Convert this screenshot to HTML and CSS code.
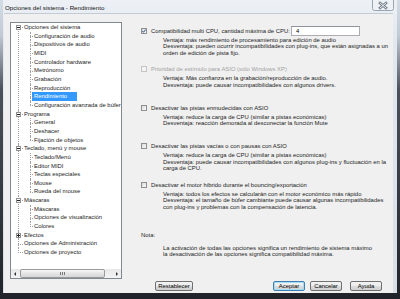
FILE: index.html
```html
<!DOCTYPE html>
<html lang="es">
<head>
    <meta charset="UTF-8">
    <title>Opciones del sistema - Rendimiento</title>
    <link rel="stylesheet" href="styles.css">
</head>
<body>
    <div class="window">
        <div class="titlebar">
            <span class="title">Opciones del sistema - Rendimiento</span>
            <svg class="close" width="22" height="11" viewBox="0 0 22 11">
                <rect x="0.5" y="-2" width="21" height="12.5" rx="2" fill="#eef2f6" stroke="#9aa6b2"/>
                <path d="M8 3 L14 8 M14 3 L8 8" stroke="#6d7884" stroke-width="2.6" stroke-linecap="square"/>
                <path d="M8 3 L14 8 M14 3 L8 8" stroke="#f4f6f8" stroke-width="1" stroke-linecap="square"/>
            </svg>
        </div>
        <div class="client">
            <div class="treebox">
                <ul class="tree">
                    <li class="open"><span class="exp"></span><div class="row">Opciones del sistema</div>
                        <ul>
                            <li><div class="row">Configuración de audio</div></li>
                            <li><div class="row">Dispositivos de audio</div></li>
                            <li><div class="row">MIDI</div></li>
                            <li><div class="row">Controlador hardware</div></li>
                            <li><div class="row">Metrónomo</div></li>
                            <li><div class="row">Grabación</div></li>
                            <li><div class="row">Reproducción</div></li>
                            <li><div class="row"><span class="sel">Rendimiento</span></div></li>
                            <li><div class="row">Configuración avanzada de búfer</div></li>
                        </ul>
                    </li>
                    <li class="open"><span class="exp"></span><div class="row">Programa</div>
                        <ul>
                            <li><div class="row">General</div></li>
                            <li><div class="row">Deshacer</div></li>
                            <li><div class="row">Fijación de objetos</div></li>
                        </ul>
                    </li>
                    <li class="open"><span class="exp"></span><div class="row">Teclado, menú y mouse</div>
                        <ul>
                            <li><div class="row">Teclado/Menú</div></li>
                            <li><div class="row">Editor MIDI</div></li>
                            <li><div class="row">Teclas especiales</div></li>
                            <li><div class="row">Mouse</div></li>
                            <li><div class="row">Rueda del mouse</div></li>
                        </ul>
                    </li>
                    <li class="open"><span class="exp"></span><div class="row">Máscaras</div>
                        <ul>
                            <li><div class="row">Máscaras</div></li>
                            <li><div class="row">Opciones de visualización</div></li>
                            <li><div class="row">Colores</div></li>
                        </ul>
                    </li>
                    <li class="closed"><span class="exp"></span><div class="row">Efectos</div></li>
                    <li><div class="row">Opciones de Administración</div></li>
                    <li><div class="row">Opciones de proyecto</div></li>
                </ul>
                <div class="hscroll">
                    <span class="arrow left"></span>
                    <div class="track"><div class="thumb"><span class="grip"></span></div></div>
                    <span class="arrow right"></span>
                </div>
            </div>

            <div class="column">
                <div class="opt">
                    <div class="opt-head">
                        <span class="check checked">
                            <svg width="4" height="4" viewBox="0 0 4 4"><path d="M0.3 2 L1.5 3.3 L3.7 0.5" fill="none" stroke="#2d4a8a" stroke-width="1"/></svg>
                        </span>
                        <span>Compatibilidad multi CPU, cantidad máxima de CPU:</span>
                        <input class="cpu" value="4">
                    </div>
                    <div class="opt-desc">
                        Ventaja: más rendimiento de procesamiento para edición de audio<br>
                        Desventaja: pueden ocurrir incompatibilidades con plug-ins, que están asignadas a un<br>
                        orden de edición de pista fijo.
                    </div>
                </div>
                <div class="opt disabled">
                    <div class="opt-head">
                        <span class="check"></span>
                        <span>Prioridad de estímulo para ASIO (sólo Windows XP)</span>
                    </div>
                    <div class="opt-desc">
                        Ventaja: Más confianza en la grabación/reproducción de audio.<br>
                        Desventaja: puede causar incompatibilidades con algunos drivers.
                    </div>
                </div>
                <div class="opt">
                    <div class="opt-head">
                        <span class="check"></span>
                        <span>Desactivar las pistas enmudecidas con ASIO</span>
                    </div>
                    <div class="opt-desc">
                        Ventaja: reduce la carga de CPU (similar a pistas económicas)<br>
                        Desventaja: reacción demorada al desconectar la función Mute
                    </div>
                </div>
                <div class="opt">
                    <div class="opt-head">
                        <span class="check"></span>
                        <span>Desactivar las pistas vacías o con pausas con ASIO</span>
                    </div>
                    <div class="opt-desc">
                        Ventaja: reduce la carga de CPU (similar a pistas económicas)<br>
                        Desventaja: puede causar incompatibilidades con algunos plug-ins y fluctuación en la<br>
                        carga de CPU.
                    </div>
                </div>
                <div class="opt">
                    <div class="opt-head">
                        <span class="check"></span>
                        <span>Desactivar el motor híbrido durante el bouncing/exportación</span>
                    </div>
                    <div class="opt-desc">
                        Ventaja: todos los efectos se calcularán con el motor económico más rápido<br>
                        Desventaja: el tamaño de búfer cambiante puede causar algunas incompatibilidades<br>
                        con plug-ins y problemas con la compensación de latencia.
                    </div>
                </div>

                <div class="note">
                    <div>Nota:</div>
                    <p>La activación de todas las opciones significa un rendimiento de sistema máximo<br>
                    la desactivación de las opciones significa compatibilidad máxima.</p>
                </div>

                <div class="buttons">
                    <button class="btn reset">Restablecer</button>
                    <button class="btn ok">Aceptar</button>
                    <button class="btn cancel">Cancelar</button>
                    <button class="btn help">Ayuda</button>
                </div>
            </div>
        </div>
    </div>
</body>
</html>
```

FILE: styles.css
```css
* { box-sizing: border-box; }
body { margin: 0; width: 400px; height: 299px; overflow: hidden; background: linear-gradient(#d3dbe4 0, #c2cad4 35px, #4b515a 90px, #202329 100%); font-family: "Liberation Sans", Arial, sans-serif; font-size: 5.9px; color: #1c1c1c; }

.window { margin-left: 3px; width: 394px; height: 293px; padding: 0 4px 0 1px; background: linear-gradient(#edf1f6, #e2e8ef 40px, #d8dfe7); display: flex; flex-direction: column; }
.titlebar { height: 13px; display: flex; justify-content: space-between; padding-left: 1px; }
.title { line-height: 16px; font-size: 6.2px; color: #111; }
.close { display: block; margin-right: -1px; }

.client { flex: 1; display: flex; background: #f0f0f0; border-top: 1px solid #c3ccd6; }

/* tree */
.treebox { margin: 8px 0 0 6px; width: 112px; height: 257px; border: 1px solid #828790; background: #fff; display: flex; flex-direction: column; }
.tree, .tree ul { list-style: none; margin: 0; padding: 0; }
.tree { flex: 1; overflow: hidden; }
.tree li { position: relative; padding-left: 13px; }
.tree ul li { padding-left: 10px; }
.row { height: 8.67px; line-height: 8.67px; white-space: nowrap; }
.tree li::before { content: ""; position: absolute; left: 7px; top: 0; bottom: 0; border-left: 1px dotted #a0a0a0; }
.tree li::after { content: ""; position: absolute; left: 7px; top: 4.3px; width: 5px; border-top: 1px dotted #a0a0a0; }
.tree ul li::before, .tree ul li::after { left: 6px; }
.tree ul li::after { width: 3px; }
.tree li:last-child::before { bottom: auto; height: 4.5px; }
.tree > li:first-child::before { top: 4.3px; }
.exp { position: absolute; left: 5px; top: 2px; width: 5px; height: 5px; border: 1px solid #919191; background: #fff; z-index: 1; }
.exp::before { content: ""; position: absolute; left: 0; right: 0; top: 1px; height: 1px; background: #222; }
.closed .exp::after { content: ""; position: absolute; left: 1px; top: 0; bottom: 0; width: 1px; background: #222; }
.sel { display: inline-block; background: #3399ff; color: #fff; padding: 0 10px 0 2px; margin-left: -2px; line-height: 8.67px; }

.hscroll { height: 9px; display: flex; align-items: center; background: linear-gradient(#e8e8e8, #f4f4f4); }
.arrow { width: 9px; height: 9px; position: relative; }
.arrow::before { content: ""; position: absolute; top: 2.5px; border-top: 2px solid transparent; border-bottom: 2px solid transparent; }
.arrow.left::before { left: 3px; border-right: 2px solid #333; }
.arrow.right::before { left: 4px; border-left: 2px solid #333; }
.track { flex: 1; height: 9px; }
.thumb { width: 85px; height: 9px; border: 1px solid #9a9a9a; border-radius: 2px; background: linear-gradient(#f7f7f7, #e4e4e4 50%, #d6d6d6); display: flex; align-items: center; justify-content: center; }
.grip { width: 5px; height: 3px; border-left: 1px solid #777; border-right: 1px solid #777; position: relative; }
.grip::after { content: ""; position: absolute; left: 1px; top: 0; width: 1px; height: 3px; background: #777; }

/* options */
.column { margin-left: 19px; width: 252px; display: flex; flex-direction: column; padding: 11.5px 0 2px; }
.opt { height: 38.5px; }
.opt-head { display: flex; align-items: center; height: 10px; white-space: nowrap; }
.check { width: 6px; height: 6px; border: 1px solid #8e8f8f; background: linear-gradient(135deg, #dadada, #fafafa); margin-right: 4px; display: flex; align-items: center; justify-content: center; }
.check svg { display: block; }
.disabled .opt-head { color: #a2a2a2; }
.disabled .check { border-color: #c5c5c5; background: #f4f4f4; }
.opt-desc { margin: 1px 0 0 22px; line-height: 6.5px; white-space: nowrap; }
.cpu { margin-left: auto; margin-right: 33px; width: 69px; height: 10px; border: 1px solid #abadb3; border-top-color: #8f949b; background: #fff; padding: 0 0 0 4px; font: inherit; line-height: 8px; outline: none; }

.note { margin-top: 13.5px; line-height: 6.5px; }
.note p { margin: 6.5px 0 0 22px; white-space: nowrap; }

.buttons { margin-top: auto; display: flex; padding-right: 11px; }
.btn { height: 10px; width: 32px; padding: 0; border: 1px solid #707070; border-radius: 2px; background: linear-gradient(#f3f3f3, #ebebeb 50%, #dddddd 50%, #cfcfcf); font: inherit; line-height: 8px; color: #000; text-align: center; }
.reset { width: 38px; margin-left: 14px; }
.ok { margin-left: auto; border-color: #3c7fb1; box-shadow: inset 0 0 0 1px #a6dcf6; }
.cancel { margin-left: 5px; }
.help { margin-left: 8px; }
```
